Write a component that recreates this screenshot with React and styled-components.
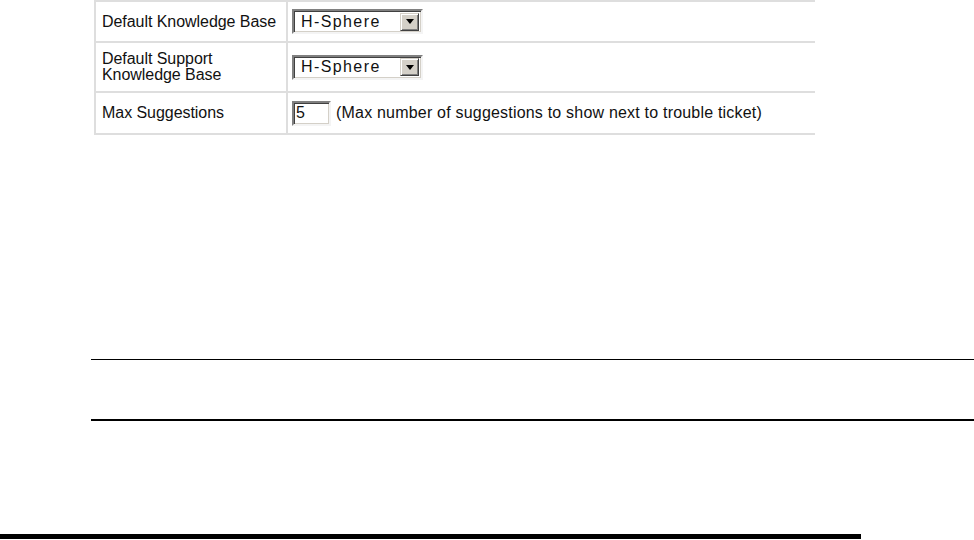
import React from "react";
import styled, { createGlobalStyle } from "styled-components";

const Global = createGlobalStyle`
  html, body { margin: 0; padding: 0; background: #fff; }
  body { font-family: "Liberation Sans", Arial, sans-serif; color: #000; overflow: hidden; }
`;

const Page = styled.div`
  width: 974px;
  height: 540px;
  display: flex;
  flex-direction: column;
`;

const Table = styled.div`
  margin-left: 94px;
  width: 721px;
  border-top: 2px solid #dedede;
  display: flex;
  flex-direction: column;
`;

const Row = styled.div`
  display: grid;
  grid-template-columns: 194px 1fr;
  height: ${(p) => p.$h}px;
  border-bottom: 2px solid #dedede;
  box-sizing: border-box;
`;

const Label = styled.div`
  border-left: 2px solid #dedede;
  border-right: 2px solid #dedede;
  padding-left: 6px;
  display: flex;
  align-items: center;
  font-size: 16px;
  line-height: 16px;
  letter-spacing: -0.05px;
  color: #111;
`;

const Value = styled.div`
  display: flex;
  align-items: center;
  padding-left: 4px;
  gap: 5px;
  font-size: 16px;
`;

const Sunken = styled.div`
  box-sizing: border-box;
  height: 25px;
  width: ${(p) => p.$w}px;
  background: #fff;
  border-top: 2px solid #808080;
  border-left: 2px solid #808080;
  border-bottom: 2px solid #f4f4f4;
  border-right: 2px solid #f4f4f4;
  box-shadow: inset 1px 1px 0 #404040, inset -1px -1px 0 #d4d0c8;
  display: flex;
  align-items: center;
`;

const SelectText = styled.span`
  flex: 1;
  padding-left: 7px;
  font-size: 16px;
  letter-spacing: 1.4px;
  color: #111;
`;

const DropButton = styled.div`
  box-sizing: border-box;
  width: 19px;
  height: 18px;
  margin-right: 2px;
  background: #d4d0c8;
  border-top: 1px solid #d4d0c8;
  border-left: 1px solid #d4d0c8;
  border-bottom: 1px solid #404040;
  border-right: 1px solid #404040;
  box-shadow: inset 1px 1px 0 #fff, inset -1px -1px 0 #808080;
  display: flex;
  align-items: center;
  justify-content: center;
`;

const InputText = styled.span`
  padding-left: 2px;
  font-size: 16px;
  color: #111;
`;

const Hint = styled.span`
  font-size: 16px;
  letter-spacing: 0.2px;
  color: #111;
`;

const ThinRule = styled.div`
  margin-left: 91px;
  height: 1px;
  background: #000;
  margin-top: ${(p) => p.$top}px;
`;

const ThickRule = styled.div`
  margin-left: 91px;
  height: 2px;
  background: #000;
  margin-top: ${(p) => p.$top}px;
`;

const FooterBar = styled.div`
  width: 861px;
  height: 5px;
  background: #000;
  margin-top: ${(p) => p.$top}px;
`;

const Select = ({ value }) => (
  <Sunken $w={131}>
    <SelectText>{value}</SelectText>
    <DropButton>
      <svg width="8" height="5" viewBox="0 0 8 5">
        <path d="M0 0h8L4 5z" fill="#000" />
      </svg>
    </DropButton>
  </Sunken>
);

export default function App() {
  return (
    <Page>
      <Global />
      <Table>
        <Row $h={41}>
          <Label>Default Knowledge Base</Label>
          <Value>
            <Select value="H-Sphere" />
          </Value>
        </Row>
        <Row $h={50}>
          <Label>
            Default Support
            <br />
            Knowledge Base
          </Label>
          <Value>
            <Select value="H-Sphere" />
          </Value>
        </Row>
        <Row $h={42}>
          <Label>Max Suggestions</Label>
          <Value>
            <Sunken $w={39}>
              <InputText>5</InputText>
            </Sunken>
            <Hint>(Max number of suggestions to show next to trouble ticket)</Hint>
          </Value>
        </Row>
      </Table>
      <ThinRule $top={224} />
      <ThickRule $top={59} />
      <FooterBar $top={113} />
    </Page>
  );
}
